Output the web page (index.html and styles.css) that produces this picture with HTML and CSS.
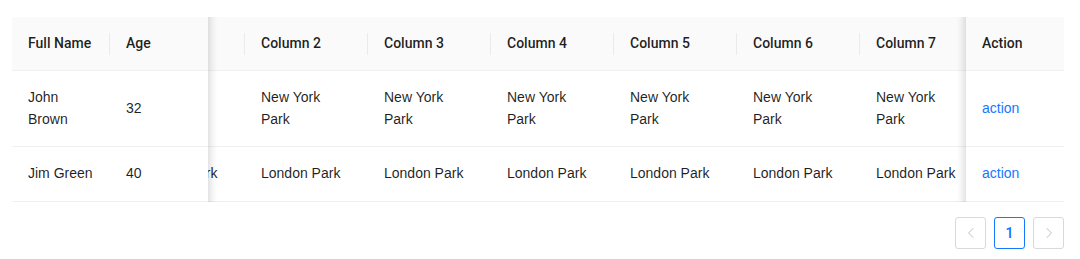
FILE: index.html
```html
<!DOCTYPE html>
<html>
<head>
<meta charset="utf-8">
<link rel="stylesheet" href="styles.css">
</head>
<body>
<div class="page">
  <div class="table">
    <div class="row head">
      <div class="cell sep">Full Name</div>
      <div class="cell">Age</div>
      <div class="scroll">
        <div class="track">
          <div class="cell col sep"></div>
          <div class="cell col sep">Column 2</div>
          <div class="cell col sep">Column 3</div>
          <div class="cell col sep">Column 4</div>
          <div class="cell col sep">Column 5</div>
          <div class="cell col sep">Column 6</div>
          <div class="cell col">Column 7</div>
        </div>
      </div>
      <div class="cell">Action</div>
    </div>
    <div class="row">
      <div class="cell">John Brown</div>
      <div class="cell">32</div>
      <div class="scroll">
        <div class="track">
          <div class="cell col">New York Park</div>
          <div class="cell col">New York Park</div>
          <div class="cell col">New York Park</div>
          <div class="cell col">New York Park</div>
          <div class="cell col">New York Park</div>
          <div class="cell col">New York Park</div>
          <div class="cell col">New York Park</div>
        </div>
      </div>
      <div class="cell"><a class="link">action</a></div>
    </div>
    <div class="row">
      <div class="cell">Jim Green</div>
      <div class="cell">40</div>
      <div class="scroll">
        <div class="track">
          <div class="cell col">London Park</div>
          <div class="cell col">London Park</div>
          <div class="cell col">London Park</div>
          <div class="cell col">London Park</div>
          <div class="cell col">London Park</div>
          <div class="cell col">London Park</div>
          <div class="cell col">London Park</div>
        </div>
      </div>
      <div class="cell"><a class="link">action</a></div>
    </div>
    <div class="shadow-left"></div>
    <div class="shadow-right"></div>
  </div>
  <div class="pager">
    <button class="pbtn disabled" aria-label="Previous"><svg width="12" height="12" viewBox="0 0 12 12"><path d="M8.3 1.2 L3.6 6 L8.3 10.8" fill="none" stroke="currentColor" stroke-width="1"/></svg></button>
    <button class="pbtn active">1</button>
    <button class="pbtn disabled" aria-label="Next"><svg width="12" height="12" viewBox="0 0 12 12"><path d="M3.7 1.2 L8.4 6 L3.7 10.8" fill="none" stroke="currentColor" stroke-width="1"/></svg></button>
  </div>
</div>
</body>
</html>
```
FILE: styles.css
```css
html, body {
  margin: 0;
  padding: 0;
  background: #ffffff;
}
body {
  font-family: "Liberation Sans", Arial, sans-serif;
  font-size: 14px;
  color: rgba(0, 0, 0, 0.88);
}
.page {
  padding: 17px 16px 0 12px;
}
.table {
  position: relative;
  width: 1052px;
}
.row {
  display: grid;
  grid-template-columns: 98px 98px 758px 98px;
  border-bottom: 1px solid #f0f0f0;
  background: #ffffff;
}
.row.head {
  background: #fafafa;
  font-family: Roboto, "Liberation Sans", Arial, sans-serif;
  font-weight: 500;
}
.cell {
  position: relative;
  padding: 16px;
  line-height: 21.5px;
  display: flex;
  align-items: center;
}
.head .cell {
  line-height: 21px;
}
.scroll {
  overflow: hidden;
  display: flex;
}
.track {
  display: flex;
  margin-left: -86px;
  flex: none;
}
.col {
  width: 123px;
  box-sizing: border-box;
  flex: none;
}
.sep::before {
  content: "";
  position: absolute;
  right: 0;
  top: 50%;
  width: 1px;
  height: 22px;
  transform: translateY(-50%);
  background: rgba(0, 0, 0, 0.06);
}
.link {
  color: #1677ff;
  text-decoration: none;
}
.shadow-left,
.shadow-right {
  position: absolute;
  top: 0;
  bottom: 0;
  width: 30px;
  pointer-events: none;
}
.shadow-left {
  left: 196px;
  box-shadow: inset 10px 0 8px -8px rgba(0, 0, 0, 0.16);
}
.shadow-right {
  right: 98px;
  box-shadow: inset -10px 0 8px -8px rgba(0, 0, 0, 0.16);
}
.pager {
  width: 1052px;
  display: flex;
  justify-content: flex-end;
  gap: 8px;
  margin-top: 15px;
}
.pbtn {
  width: 31px;
  height: 32px;
  box-sizing: border-box;
  border: 1px solid #d9d9d9;
  border-radius: 3px;
  background: #ffffff;
  font-family: Roboto, "Liberation Sans", Arial, sans-serif;
  font-size: 14px;
  padding: 0;
  display: flex;
  align-items: center;
  justify-content: center;
}
.pbtn.disabled {
  color: rgba(0, 0, 0, 0.25);
}
.pbtn.active {
  border-color: #1677ff;
  color: #1677ff;
  font-weight: 600;
}
```
